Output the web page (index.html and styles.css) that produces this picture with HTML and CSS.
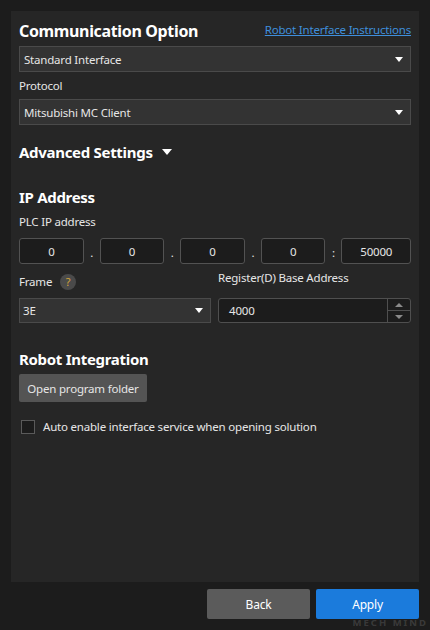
FILE: index.html
```html
<!DOCTYPE html>
<html>
<head>
<meta charset="utf-8">
<link rel="stylesheet" href="styles.css">
</head>
<body>
<div class="window">
  <div class="panel">
    <div class="header">
      <span class="title">Communication Option</span>
      <a class="link">Robot Interface Instructions</a>
    </div>
    <div class="select"><span>Standard Interface</span><i class="caret"></i></div>
    <div class="label">Protocol</div>
    <div class="select"><span>Mitsubishi MC Client</span><i class="caret"></i></div>

    <div class="section adv">Advanced Settings <i class="caret big"></i></div>

    <div class="section ip">IP Address</div>
    <div class="label plc">PLC IP address</div>
    <div class="iprow">
      <div class="ipbox">0</div><span class="sep">.</span>
      <div class="ipbox">0</div><span class="sep">.</span>
      <div class="ipbox">0</div><span class="sep">.</span>
      <div class="ipbox">0</div><span class="sep colon">:</span>
      <div class="ipbox port">50000</div>
    </div>

    <div class="two">
      <div class="col">
        <div class="label frame">Frame <span class="help">?</span></div>
        <div class="select small"><span>3E</span><i class="caret"></i></div>
      </div>
      <div class="col">
        <div class="label reg">Register(D) Base Address</div>
        <div class="spin">
          <span class="val">4000</span>
          <div class="spinbtns">
            <div class="sb"><i class="up"></i></div>
            <div class="sb"><i class="down"></i></div>
          </div>
        </div>
      </div>
    </div>

    <div class="section robot">Robot Integration</div>
    <div class="btn-folder">Open program folder</div>
    <label class="check"><span class="box"></span><span>Auto enable interface service when opening solution</span></label>
  </div>
  <div class="footer">
    <div class="btn back">Back</div>
    <div class="btn apply">Apply</div>
    <div class="watermark">MECH MIND</div>
  </div>
</div>
</body>
</html>
```

FILE: styles.css
```css
html, body {
  margin: 0;
  padding: 0;
  background: #1c1c1c;
}
body {
  width: 430px;
  height: 630px;
  overflow: hidden;
  font-family: "Segoe UI", "Noto Sans", "Open Sans", sans-serif;
  font-size: 11.5px;
  letter-spacing: -0.2px;
  color: #e6e6e6;
}
.window {
  width: 430px;
  height: 630px;
  box-sizing: border-box;
  padding-top: 11px;
}
.panel {
  margin: 0 11px;
  height: 571px;
  background: #262626;
  box-sizing: border-box;
  padding: 4px 8px 0;
}
.header {
  height: 31px;
  display: flex;
  align-items: center;
  justify-content: space-between;
}
.title {
  font-size: 16px;
  font-weight: 700;
  color: #ffffff;
  letter-spacing: -0.35px;
}
.link {
  color: #3f8fdc;
  text-decoration: underline;
  margin-top: -2px;
}
.select {
  height: 26px;
  box-sizing: border-box;
  border: 1px solid #4a4a4a;
  background: #333333;
  display: flex;
  align-items: center;
  justify-content: space-between;
  padding: 0 7px 0 4px;
}
.caret {
  width: 0;
  height: 0;
  border-left: 4.5px solid transparent;
  border-right: 4.5px solid transparent;
  border-top: 5px solid #ffffff;
}
.caret.big {
  display: inline-block;
  border-left-width: 5px;
  border-right-width: 5px;
  border-top-width: 6px;
  margin-left: 6px;
  vertical-align: 3px;
}
.label {
  height: 27px;
  line-height: 27px;
}
.section {
  font-size: 15px;
  font-weight: 700;
  color: #ffffff;
  height: 26px;
  line-height: 26px;
  letter-spacing: -0.3px;
}
.adv { margin-top: 14px; }
.ip { margin-top: 19px; }
.label.plc {
  height: 24px;
  line-height: 24px;
  margin-bottom: 4px;
}
.iprow {
  display: flex;
  align-items: center;
  height: 26px;
}
.ipbox {
  width: 65px;
  height: 26px;
  box-sizing: border-box;
  border: 1px solid #525252;
  border-radius: 3px;
  background: #1c1c1c;
  display: flex;
  align-items: center;
  justify-content: center;
}
.ipbox.port { width: 70px; }
.sep {
  width: 16px;
  text-align: center;
  line-height: 1;
  padding-top: 4px;
}
.two {
  display: flex;
  gap: 7px;
}
.col { flex: 0 0 192px; }
.col + .col { flex: 1 1 auto; }
.label.frame {
  height: 34px;
  line-height: 34px;
  display: flex;
  align-items: center;
  gap: 8px;
  padding-top: 2px;
  box-sizing: border-box;
}
.help {
  width: 16px;
  height: 16px;
  border-radius: 50%;
  background: #4a4a4a;
  color: #d6a63a;
  font-size: 11px;
  line-height: 16px;
  text-align: center;
  letter-spacing: 0;
}
.label.reg {
  height: 34px;
  line-height: 28px;
}
.select.small {
  height: 25px;
  padding-left: 3px;
}
.spin {
  height: 25px;
  box-sizing: border-box;
  border: 1px solid #4f4f4f;
  border-radius: 3px;
  background: #1c1c1c;
  display: flex;
  align-items: center;
}
.spin .val {
  flex: 1;
  padding-left: 10px;
}
.spinbtns {
  width: 22px;
  height: 100%;
  border-left: 1px solid #4f4f4f;
  display: flex;
  flex-direction: column;
}
.sb {
  flex: 1;
  display: flex;
  align-items: center;
  justify-content: center;
}
.sb + .sb { border-top: 1px solid #4f4f4f; }
.sb .up {
  width: 0; height: 0;
  border-left: 4px solid transparent;
  border-right: 4px solid transparent;
  border-bottom: 4px solid #8a8a8a;
}
.sb .down {
  width: 0; height: 0;
  border-left: 4px solid transparent;
  border-right: 4px solid transparent;
  border-top: 4px solid #8a8a8a;
}
.robot { margin-top: 24px; height: 24px; line-height: 24px; }
.btn-folder {
  margin-top: 3px;
  width: 128px;
  height: 28px;
  box-sizing: border-box;
  background: #545454;
  border-radius: 2px;
  display: flex;
  align-items: center;
  justify-content: center;
}
.check {
  display: flex;
  align-items: center;
  margin-top: 17px;
  padding-left: 2px;
  gap: 8px;
}
.box {
  width: 14px;
  height: 14px;
  box-sizing: border-box;
  border: 1px solid #5a5a5a;
  background: #1c1c1c;
}
.footer {
  position: relative;
  display: flex;
  justify-content: flex-end;
  gap: 6px;
  padding: 7px 11px 0;
}
.btn {
  width: 103px;
  height: 30px;
  border-radius: 2px;
  display: flex;
  align-items: center;
  justify-content: center;
  color: #ffffff;
  font-size: 12px;
}
.back { background: #5b5b5b; }
.apply { background: #1b7bdc; }
.watermark {
  position: absolute;
  right: 2px;
  top: 36px;
  font-size: 9.5px;
  line-height: 10px;
  font-weight: 700;
  letter-spacing: 2px;
  color: rgba(255, 255, 255, 0.14);
}
```
